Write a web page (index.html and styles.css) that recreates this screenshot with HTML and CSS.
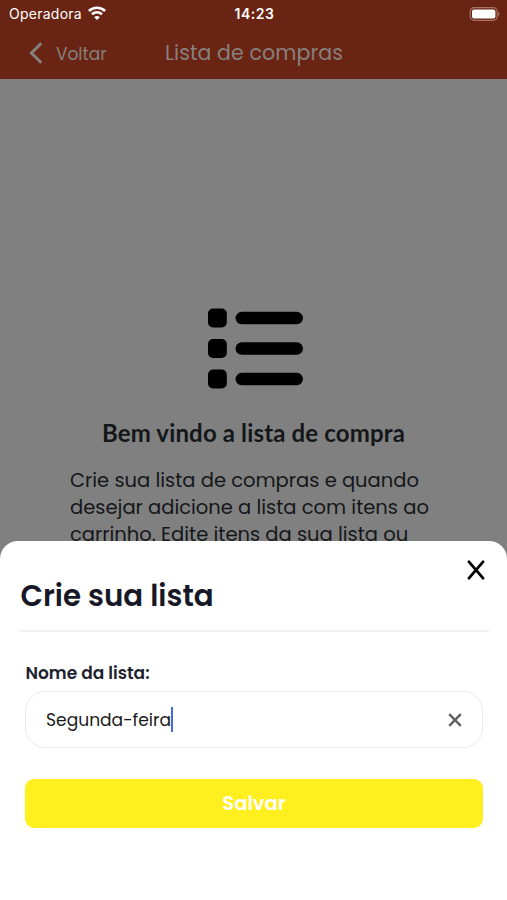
FILE: index.html
```html
<!DOCTYPE html>
<html lang="pt-BR">
<head>
    <meta charset="UTF-8">
    <meta name="viewport" content="width=device-width, initial-scale=1.0">
    <title>Lista de compras</title>
    <link rel="stylesheet" href="styles.css">
</head>
<body>
    <div class="screen">
        <header class="header">
            <div class="status">
                <div class="carrier">
                    <span>Operadora</span>
                    <svg class="wifi" width="18" height="14" viewBox="0 0 18 14" fill="none" stroke="#fff" stroke-width="2.6">
                        <path d="M.9 5C5.300.6 12.700.6 17.100 5"/>
                        <path d="M4 8.300C7 5.600 11 5.600 14 8.300"/>
                        <path d="M9 14L6.200 11.200C7.800 9.700 10.200 9.700 11.800 11.200Z" fill="#fff" stroke="none"/>
                    </svg>
                </div>
                <span class="time">14:23</span>
                <svg class="battery" width="31" height="14" viewBox="0 0 31 14">
                    <rect x="1.200" y=".7" width="27" height="12.600" rx="4" fill="none" stroke="#a77465" stroke-width="1.200"/>
                    <rect x="3" y="2.500" width="23.400" height="9" rx="2" fill="#fff"/>
                    <path d="M29.100 4.500Q32 7 29.100 9.500Z" fill="#a77465"/>
                </svg>
            </div>
            <nav class="nav">
                <a class="back">
                    <svg width="14" height="22" viewBox="0 0 14 22" fill="none" stroke="#87807d" stroke-width="3">
                        <path d="M12.300 1.200L2.400 11L12.300 20.800"/>
                    </svg>
                    <span>Voltar</span>
                </a>
                <h1>Lista de compras</h1>
            </nav>
        </header>
        <main class="welcome">
            <svg class="list-icon" width="96" height="81" viewBox="0 0 96 81">
                <rect x="0" y=".5" width="18.800" height="19" rx="5"/>
                <rect x="27.500" y="3.800" width="67.500" height="12.500" rx="6.250"/>
                <rect x="0" y="31" width="18.800" height="19" rx="5"/>
                <rect x="27.500" y="34.300" width="67.500" height="12.500" rx="6.250"/>
                <rect x="0" y="61.500" width="18.800" height="19" rx="5"/>
                <rect x="27.500" y="64.800" width="67.500" height="12.500" rx="6.250"/>
            </svg>
            <h2>Bem vindo a lista de compra</h2>
            <p>Crie sua lista de compras e quando<br>desejar adicione a lista com itens ao<br>carrinho. Edite itens da sua lista ou</p>
        </main>
        <section class="sheet">
            <svg class="close" width="18" height="20" viewBox="0 0 18 20" fill="none" stroke="#000" stroke-width="2.800" stroke-linecap="round">
                <path d="M2 1.800L16 18.200M16 1.800L2 18.200"/>
            </svg>
            <h3>Crie sua lista</h3>
            <div class="form">
                <label>Nome da lista:</label>
                <div class="field">
                    <span class="value">Segunda-feira</span>
                    <i class="caret"></i>
                    <svg class="clear" width="14" height="14" viewBox="0 0 14 14" fill="none" stroke="#606163" stroke-width="2.500">
                        <path d="M1.200 1.200L12.800 12.800M12.800 1.200L1.200 12.800"/>
                    </svg>
                </div>
                <button class="save">Salvar</button>
            </div>
        </section>
    </div>
</body>
</html>
```
FILE: styles.css
```css
*{padding: 0;margin: 0;box-sizing: border-box;}
body{font-family: Poppins, Inter, sans-serif;}
.screen{position: relative;width: 507px;height: 900px;overflow: hidden;background: #808080;}

.header{height: 79px;background: #692413;}
.status{display: grid;grid-template-columns: 1fr auto 1fr;align-items: center;height: 27px;padding: 0 7px 0 9px;color: #fff;font: 14px Inter, sans-serif;}
.carrier{display: flex;align-items: center;gap: 6px;letter-spacing: .25px;}
.wifi{margin-bottom: 2px;}
.time{font-weight: 600;letter-spacing: .5px;}
.battery{justify-self: end;}
.nav{display: flex;align-items: center;height: 52px;padding-left: 29px;color: #87807d;}
.back{display: flex;align-items: center;gap: 13px;width: 136px;font-size: 17px;}
.back span{padding-top: 2px;}
.nav h1{font-size: 20.500px;font-weight: 400;letter-spacing: .12px;line-height: 28px;white-space: nowrap;}

.welcome{display: flex;flex-direction: column;align-items: center;padding-top: 229px;color: #14171a;}
.list-icon{fill: #000;margin-left: 5px;}
.welcome h2{margin-top: 29px;font: 700 24px/30px Lato, sans-serif;letter-spacing: .15px;white-space: nowrap;}
.welcome p{width: 367px;margin-top: 19px;font-size: 19.500px;line-height: 27px;white-space: nowrap;}

.sheet{position: absolute;left: 0;right: 0;bottom: 0;height: 359px;padding: 30px 18px 0 20px;background: #fff;border-radius: 18px 18px 0 0;}
.close{position: absolute;top: 19px;right: 22px;}
.sheet h3{height: 61px;border-bottom: 2px solid #eef0f1;color: #171827;font-size: 29.300px;font-weight: 600;line-height: 50px;text-indent: .5px;}
.form{display: flex;flex-direction: column;padding: 29px 6px 0 5px;}
.form label{color: #20222d;font-size: 17px;font-weight: 600;line-height: 24px;text-indent: .5px;}
.field{display: flex;align-items: center;height: 57px;margin-top: 6px;padding: 0 20px;border: 1.500px solid #e8ebed;border-radius: 20px;}
.value{color: #1b1b1b;font-size: 17.100px;}
.caret{width: 2px;height: 25px;background: #4169e1;}
.clear{margin-left: auto;}
.save{height: 49px;margin-top: 31px;border: 0;border-radius: 9px;background: #ffef1e;color: #fff;font-family: inherit;font-size: 19.500px;font-weight: 600;}
```
